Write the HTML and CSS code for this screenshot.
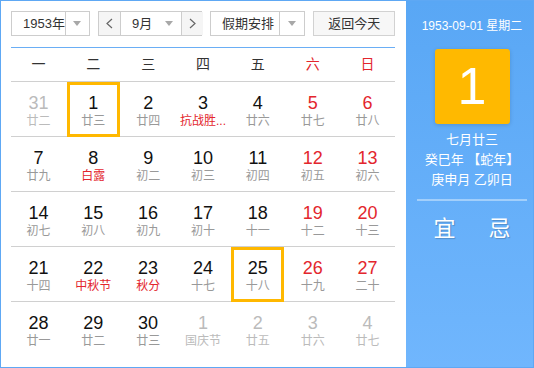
FILE: index.html
```html
<!DOCTYPE html>
<html lang="zh-CN">
<head>
<meta charset="UTF-8">
<title>万年历</title>
<link rel="stylesheet" href="styles.css">
</head>
<body>

<div class="calendar">
    <div class="main">
        <div class="toolbar">
            <div class="select year-select">
                <span class="value">1953年</span>
                <span class="arrow"></span>
            </div>
            <div class="select month-select">
                <span class="step">
                    <svg width="7" height="11" viewBox="0 0 7 11"><polyline points="6,1 1,5.5 6,10" fill="none" stroke="#666" stroke-width="1.2"/></svg>
                </span>
                <span class="value">9月</span>
                <span class="arrow plain"></span>
                <span class="step next">
                    <svg width="7" height="11" viewBox="0 0 7 11"><polyline points="1,1 6,5.5 1,10" fill="none" stroke="#666" stroke-width="1.2"/></svg>
                </span>
            </div>
            <div class="select holiday-select">
                <span class="value">假期安排</span>
                <span class="arrow"></span>
            </div>
            <div class="today-button">返回今天</div>
        </div>

        <div class="weekdays">
            <span>一</span><span>二</span><span>三</span><span>四</span><span>五</span>
            <span class="weekend">六</span><span class="weekend">日</span>
        </div>

        <div class="week">
            <div class="day other"><b>31</b><i>廿二</i></div>
            <div class="day on"><b>1</b><i>廿三</i></div>
            <div class="day"><b>2</b><i>廿四</i></div>
            <div class="day"><b>3</b><i class="festival">抗战胜...</i></div>
            <div class="day"><b>4</b><i>廿六</i></div>
            <div class="day weekend"><b>5</b><i>廿七</i></div>
            <div class="day weekend"><b>6</b><i>廿八</i></div>
        </div>
        <div class="week">
            <div class="day"><b>7</b><i>廿九</i></div>
            <div class="day"><b>8</b><i class="festival">白露</i></div>
            <div class="day"><b>9</b><i>初二</i></div>
            <div class="day"><b>10</b><i>初三</i></div>
            <div class="day"><b>11</b><i>初四</i></div>
            <div class="day weekend"><b>12</b><i>初五</i></div>
            <div class="day weekend"><b>13</b><i>初六</i></div>
        </div>
        <div class="week">
            <div class="day"><b>14</b><i>初七</i></div>
            <div class="day"><b>15</b><i>初八</i></div>
            <div class="day"><b>16</b><i>初九</i></div>
            <div class="day"><b>17</b><i>初十</i></div>
            <div class="day"><b>18</b><i>十一</i></div>
            <div class="day weekend"><b>19</b><i>十二</i></div>
            <div class="day weekend"><b>20</b><i>十三</i></div>
        </div>
        <div class="week">
            <div class="day"><b>21</b><i>十四</i></div>
            <div class="day"><b>22</b><i class="festival">中秋节</i></div>
            <div class="day"><b>23</b><i class="festival">秋分</i></div>
            <div class="day"><b>24</b><i>十七</i></div>
            <div class="day on"><b>25</b><i>十八</i></div>
            <div class="day weekend"><b>26</b><i>十九</i></div>
            <div class="day weekend"><b>27</b><i>二十</i></div>
        </div>
        <div class="week">
            <div class="day"><b>28</b><i>廿一</i></div>
            <div class="day"><b>29</b><i>廿二</i></div>
            <div class="day"><b>30</b><i>廿三</i></div>
            <div class="day other"><b>1</b><i>国庆节</i></div>
            <div class="day other"><b>2</b><i>廿五</i></div>
            <div class="day other"><b>3</b><i>廿六</i></div>
            <div class="day other"><b>4</b><i>廿七</i></div>
        </div>
    </div>

    <div class="side">
        <div class="side-date">1953-09-01 星期二</div>
        <div class="big-day">1</div>
        <div class="lunar-info">
            <div>七月廿三</div>
            <div>癸巳年 【蛇年】</div>
            <div>庚申月 乙卯日</div>
        </div>
        <div class="divider"></div>
        <div class="yiji">
            <span>宜</span>
            <span>忌</span>
        </div>
    </div>
</div>

</body>
</html>
```

FILE: styles.css
```css
body {
    margin: 0;
    font-family: "Liberation Sans", "Noto Sans CJK SC", sans-serif;
}
.calendar {
    display: flex;
    width: 534px;
    height: 368px;
    box-sizing: border-box;
    border: 1px solid #5ea8f4;
}
.main {
    width: 405px;
    padding: 10px 11px 0 10px;
    box-sizing: border-box;
    background: #fff;
}

/* toolbar */
.toolbar {
    display: flex;
    gap: 8px;
    height: 25px;
}
.select {
    display: flex;
    border: 1px solid #cdcdcd;
    box-sizing: border-box;
    font-size: 13px;
    color: #333;
    background: #fff;
    white-space: nowrap;
}
.select .value {
    flex: 1;
    padding-left: 11px;
    line-height: 23px;
}
.select .arrow {
    flex: none;
    width: 23px;
    border-left: 1px solid #cdcdcd;
    display: flex;
    align-items: center;
    justify-content: center;
}
.select .arrow.plain {
    border-left: none;
    width: 24px;
}
.select .arrow::after {
    content: "";
    border-left: 4px solid transparent;
    border-right: 4px solid transparent;
    border-top: 5px solid #a8a8a8;
}
.year-select {
    width: 79px;
}
.month-select {
    width: 104px;
}
.month-select .value {
    flex: none;
    width: 25px;
}
.month-select .step {
    flex: none;
    width: 21px;
    background: #f5f5f5;
    border-right: 1px solid #cdcdcd;
    display: flex;
    align-items: center;
    justify-content: center;
}
.month-select .step.next {
    border-right: none;
    border-left: 1px solid #cdcdcd;
}
.holiday-select {
    width: 96px;
}
.holiday-select .arrow {
    width: 24px;
}
.today-button {
    width: 82px;
    border: 1px solid #d2d2d2;
    box-sizing: border-box;
    background: #f7f7f7;
    font-size: 13px;
    color: #333;
    text-align: center;
    line-height: 23px;
}

/* grid */
.weekdays {
    display: grid;
    grid-template-columns: repeat(7, 1fr);
    margin-top: 11px;
    height: 33px;
    border-top: 1px solid #6aaef5;
    border-bottom: 1px solid #d0d0d0;
    font-size: 14px;
    line-height: 33px;
    text-align: center;
    color: #333;
}
.weekdays .weekend {
    color: #e3262d;
}
.week {
    display: grid;
    grid-template-columns: repeat(7, 1fr);
    height: 54px;
    border-bottom: 1px solid #d0d0d0;
}
.week:last-child {
    border-bottom: none;
}
.day {
    height: 54px;
    padding-top: 11px;
    box-sizing: border-box;
    text-align: center;
}
.day b {
    display: block;
    font-weight: normal;
    font-size: 18px;
    line-height: 20px;
    color: #111;
}
.day i {
    display: block;
    font-style: normal;
    font-size: 12px;
    line-height: 16px;
    color: #999;
}
.day.weekend b {
    color: #e3262d;
}
.day i.festival {
    color: #e3262d;
}
.day.other b,
.day.other i {
    color: #bbb;
}
.day.on {
    position: relative;
    height: 55px;
    margin: 0 1px;
    padding-top: 8px;
    border: 3px solid #ffb800;
}

/* right panel */
.side {
    flex: 1;
    padding: 16px 0 0 5px;
    background: linear-gradient(#59a7f5, #70b6fd);
    color: #fff;
    text-align: center;
}
.side-date {
    font-size: 12px;
    line-height: 18px;
}
.big-day {
    width: 75px;
    height: 75px;
    margin: 14px auto 0;
    border-radius: 3px;
    background: #ffb900;
    box-shadow: 0 1px 4px rgba(0, 0, 0, 0.15);
    font-size: 52px;
    line-height: 75px;
}
.lunar-info {
    margin-top: 6px;
    font-size: 13px;
    line-height: 20px;
}
.divider {
    width: 110px;
    height: 2px;
    margin: 9px auto 0;
    background: #a2cffb;
}
.yiji {
    display: flex;
    width: 110px;
    margin: 13px auto 0;
    font-size: 22px;
    line-height: 30px;
    text-shadow: 1px 1px 1px rgba(0, 0, 0, 0.2);
}
.yiji span {
    flex: 1;
}
```
